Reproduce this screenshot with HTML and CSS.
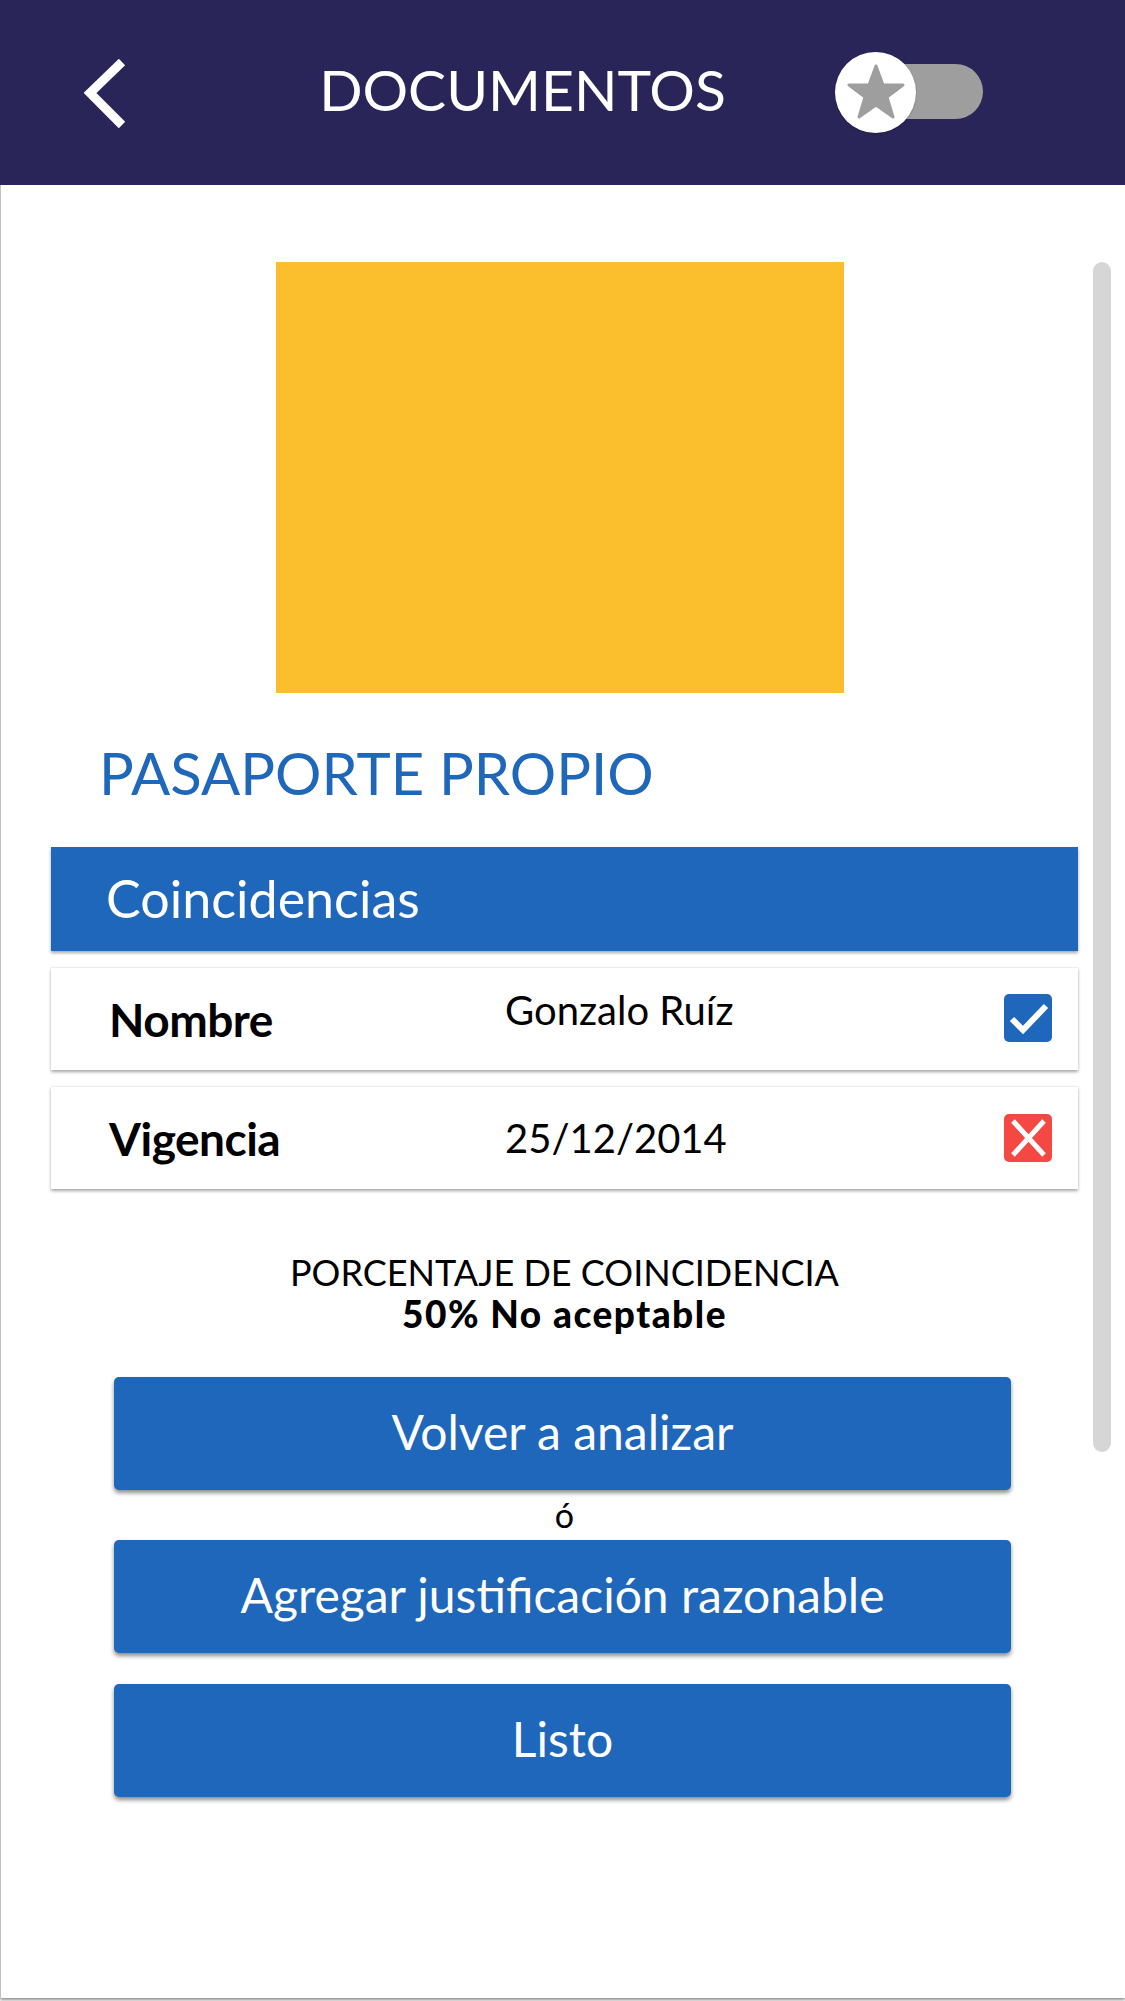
FILE: index.html
```html
<!DOCTYPE html>
<html lang="es">
<head>
<meta charset="utf-8">
<title>Documentos</title>
<link rel="stylesheet" href="styles.css">
</head>
<body>
<div class="screen">
  <header class="topbar">
    <div class="back">
      <svg width="44" height="70" viewBox="0 0 44 70"><polyline points="38,3 6,34 38,66" fill="none" stroke="#fff" stroke-width="9" stroke-linejoin="miter"/></svg>
    </div>
    <h1 class="title">DOCUMENTOS</h1>
    <div class="toggle">
      <div class="track"></div>
      <div class="knob">
        <svg width="58" height="56" viewBox="0 0 58 56"><polygon points="29,2 36,21 56,21 40,33 46,53 29,41 12,53 18,33 2,21 22,21" fill="#9e9e9e" stroke="#9e9e9e" stroke-width="3" stroke-linejoin="round"/></svg>
      </div>
    </div>
  </header>

  <main class="content">
    <div class="scrollbar"></div>
    <div class="photo"></div>
    <h2 class="doc-title">PASAPORTE PROPIO</h2>
    <div class="section-bar">Coincidencias</div>
    <div class="row">
      <span class="label">Nombre</span>
      <span class="value value-name">Gonzalo Ruíz</span>
      <span class="badge ok">
        <svg width="48" height="48" viewBox="0 0 48 48"><polyline points="8,25 19,36 42,12" fill="none" stroke="#fff" stroke-width="6"/></svg>
      </span>
    </div>
    <div class="row">
      <span class="label">Vigencia</span>
      <span class="value">25/12/2014</span>
      <span class="badge bad">
        <svg width="48" height="48" viewBox="0 0 48 48"><path d="M9 7 L40 41 M40 7 L9 41" fill="none" stroke="#fff" stroke-width="5"/></svg>
      </span>
    </div>
    <div class="percent">
      <div class="percent-label">PORCENTAJE DE COINCIDENCIA</div>
      <div class="percent-value">50% No aceptable</div>
    </div>
    <div class="actions">
      <button class="btn">Volver a analizar</button>
      <div class="or">ó</div>
      <button class="btn">Agregar justificación razonable</button>
      <button class="btn btn-last">Listo</button>
    </div>
  </main>
</div>
</body>
</html>
```

FILE: styles.css
```css
* { box-sizing: border-box; }
html, body { margin: 0; padding: 0; background: #ffffff; }
body { font-family: "Lato", "Noto Sans", sans-serif; width: 1125px; height: 2001px; overflow: hidden; }

.screen {
  width: 1125px;
  height: 1998px;
  border-left: 1px solid #c2c2c2;
  box-shadow: 0 2px 3px rgba(0,0,0,0.45);
  background: #fff;
}

.topbar {
  height: 185px;
  background: #2a2559;
  display: flex;
  align-items: center;
  margin-left: -1px;
}
.back { width: 300px; padding-left: 84px; display: flex; align-items: center; padding-top: 2px; }
.back svg { display: block; }
.title {
  margin: 0;
  width: 445px;
  text-align: center;
  color: #fff;
  font-size: 57px;
  font-weight: 400;
  letter-spacing: 0px;
  padding-bottom: 8px;
}
.toggle { position: relative; margin-left: 90px; width: 150px; height: 81px; }
.track {
  position: absolute; left: 40px; top: 12px;
  width: 108px; height: 55px; border-radius: 28px; background: #9e9e9e;
}
.knob {
  position: absolute; left: 0; top: 0;
  width: 81px; height: 81px; border-radius: 50%; background: #fff;
  display: flex; align-items: center; justify-content: center;
  box-shadow: 0 1px 2px rgba(0,0,0,0.25);
}
.knob svg { display: block; margin-top: -2px; }

.content { position: relative; padding: 77px 47px 0 50px; }
.scrollbar {
  position: absolute; right: 14px; top: 77px;
  width: 18px; height: 1190px; border-radius: 9px; background: #d6d6d6;
}
.photo { width: 568px; height: 431px; margin-left: 225px; background: #fbbf2d; }

.doc-title {
  margin: 0;
  padding: 44px 0 0 48px;
  height: 154px;
  color: #1f67bb;
  font-size: 58px;
  font-weight: 400;
  line-height: 72px;
}

.section-bar {
  height: 104px;
  background: #1f67bb;
  color: #fff;
  font-size: 52px;
  line-height: 102px;
  padding-left: 55px;
  box-shadow: 0 2px 3px rgba(0,0,0,0.35);
}

.row {
  margin-top: 16px;
  height: 103px;
  background: #fff;
  display: flex;
  align-items: center;
  border-top: 1px solid #eeeeee;
  box-shadow: 0 2px 3px rgba(0,0,0,0.35);
}
.label { width: 454px; padding-left: 58px; font-size: 46px; color: #000; font-weight: 700; letter-spacing: -0.5px; }
.value { flex: 1; font-size: 40px; color: #000; font-weight: 400; letter-spacing: 0px; }
.value-name { margin-top: -18px; }
.badge { width: 48px; height: 48px; border-radius: 5px; margin-right: 26px; display: flex; }
.badge svg { display: block; }
.badge.ok { background: #1f67bb; margin-top: -2px; }
.badge.bad { background: #f44842; }

.percent { text-align: center; color: #000; padding-top: 62px; }
.percent-label { font-size: 36px; line-height: 42px; letter-spacing: 0px; }
.percent-value { font-size: 37px; line-height: 42px; font-weight: 900; letter-spacing: 1.5px; }

.actions { padding-top: 42px; display: flex; flex-direction: column; }
.btn {
  width: 897px;
  margin-left: 63px;
  height: 113px;
  border: 0;
  border-radius: 5px;
  background: #1f67bb;
  color: #fff;
  font-family: "Lato", "Noto Sans", sans-serif;
  font-size: 48px;
  font-weight: 400;
  box-shadow: 0 3px 4px rgba(0,0,0,0.45);
  padding: 0 0 4px 0;
}
.or { text-align: center; font-size: 34px; line-height: 50px; height: 50px; color: #000; padding-top: 0; }
.btn-last { margin-top: 31px; }
```
